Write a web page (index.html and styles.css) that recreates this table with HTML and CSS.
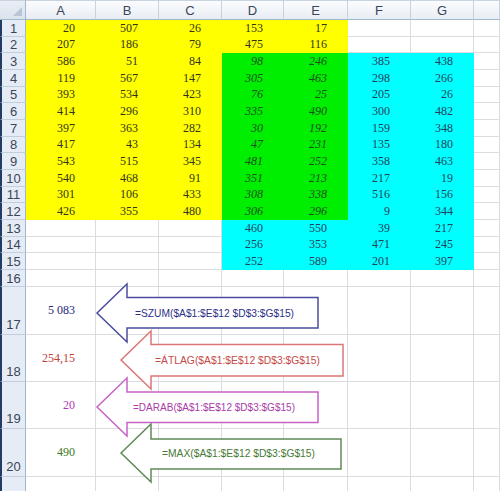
FILE: index.html
```html
<!DOCTYPE html>
<html>
<head>
<meta charset="utf-8">
<link rel="stylesheet" href="styles.css">
</head>
<body>
<div class="sheet">
  <div class="row head">
    <div class="corner"></div><div class="ch">A</div><div class="ch">B</div><div class="ch">C</div><div class="ch">D</div><div class="ch">E</div><div class="ch">F</div><div class="ch">G</div><div class="ch"></div>
  </div>
  <div class="row h17"><div class="rh">1</div><div class="c y">20</div><div class="c y">507</div><div class="c y">26</div><div class="c y">153</div><div class="c y">17</div><div class="c"></div><div class="c"></div><div class="c"></div></div>
  <div class="row h16"><div class="rh">2</div><div class="c y">207</div><div class="c y">186</div><div class="c y">79</div><div class="c y">475</div><div class="c y">116</div><div class="c"></div><div class="c"></div><div class="c"></div></div>
  <div class="row h17"><div class="rh">3</div><div class="c y">586</div><div class="c y">51</div><div class="c y">84</div><div class="c g">98</div><div class="c g">246</div><div class="c b">385</div><div class="c b">438</div><div class="c"></div></div>
  <div class="row h17"><div class="rh">4</div><div class="c y">119</div><div class="c y">567</div><div class="c y">147</div><div class="c g">305</div><div class="c g">463</div><div class="c b">298</div><div class="c b">266</div><div class="c"></div></div>
  <div class="row h16"><div class="rh">5</div><div class="c y">393</div><div class="c y">534</div><div class="c y">423</div><div class="c g">76</div><div class="c g">25</div><div class="c b">205</div><div class="c b">26</div><div class="c"></div></div>
  <div class="row h17"><div class="rh">6</div><div class="c y">414</div><div class="c y">296</div><div class="c y">310</div><div class="c g">335</div><div class="c g">490</div><div class="c b">300</div><div class="c b">482</div><div class="c"></div></div>
  <div class="row h17"><div class="rh">7</div><div class="c y">397</div><div class="c y">363</div><div class="c y">282</div><div class="c g">30</div><div class="c g">192</div><div class="c b">159</div><div class="c b">348</div><div class="c"></div></div>
  <div class="row h16"><div class="rh">8</div><div class="c y">417</div><div class="c y">43</div><div class="c y">134</div><div class="c g">47</div><div class="c g">231</div><div class="c b">135</div><div class="c b">180</div><div class="c"></div></div>
  <div class="row h17"><div class="rh">9</div><div class="c y">543</div><div class="c y">515</div><div class="c y">345</div><div class="c g">481</div><div class="c g">252</div><div class="c b">358</div><div class="c b">463</div><div class="c"></div></div>
  <div class="row h17"><div class="rh">10</div><div class="c y">540</div><div class="c y">468</div><div class="c y">91</div><div class="c g">351</div><div class="c g">213</div><div class="c b">217</div><div class="c b">19</div><div class="c"></div></div>
  <div class="row h16"><div class="rh">11</div><div class="c y">301</div><div class="c y">106</div><div class="c y">433</div><div class="c g">308</div><div class="c g">338</div><div class="c b">516</div><div class="c b">156</div><div class="c"></div></div>
  <div class="row h17"><div class="rh">12</div><div class="c y">426</div><div class="c y">355</div><div class="c y">480</div><div class="c g">306</div><div class="c g">296</div><div class="c b">9</div><div class="c b">344</div><div class="c"></div></div>
  <div class="row h17"><div class="rh">13</div><div class="c"></div><div class="c"></div><div class="c"></div><div class="c b">460</div><div class="c b">550</div><div class="c b">39</div><div class="c b">217</div><div class="c"></div></div>
  <div class="row h16"><div class="rh">14</div><div class="c"></div><div class="c"></div><div class="c"></div><div class="c b">256</div><div class="c b">353</div><div class="c b">471</div><div class="c b">245</div><div class="c"></div></div>
  <div class="row h17"><div class="rh">15</div><div class="c"></div><div class="c"></div><div class="c"></div><div class="c b">252</div><div class="c b">589</div><div class="c b">201</div><div class="c b">397</div><div class="c"></div></div>
  <div class="row h17"><div class="rh">16</div><div class="c"></div><div class="c"></div><div class="c"></div><div class="c"></div><div class="c"></div><div class="c"></div><div class="c"></div><div class="c"></div></div>
  <div class="row h48"><div class="rh tall">17</div><div class="c v-blue">5 083</div><div class="c"></div><div class="c"></div><div class="c"></div><div class="c"></div><div class="c"></div><div class="c"></div><div class="c"></div></div>
  <div class="row h47"><div class="rh tall">18</div><div class="c v-red">254,15</div><div class="c"></div><div class="c"></div><div class="c"></div><div class="c"></div><div class="c"></div><div class="c"></div><div class="c"></div></div>
  <div class="row h47"><div class="rh tall">19</div><div class="c v-mag">20</div><div class="c"></div><div class="c"></div><div class="c"></div><div class="c"></div><div class="c"></div><div class="c"></div><div class="c"></div></div>
  <div class="row h48"><div class="rh tall">20</div><div class="c v-green">490</div><div class="c"></div><div class="c"></div><div class="c"></div><div class="c"></div><div class="c"></div><div class="c"></div><div class="c"></div></div>
  <div class="row h20"><div class="rh"></div><div class="c"></div><div class="c"></div><div class="c"></div><div class="c"></div><div class="c"></div><div class="c"></div><div class="c"></div><div class="c"></div></div>

  <svg class="overlay" width="500" height="491" viewBox="0 0 500 491">
    <path class="ar ar-blue" d="M97,313 L127,284 L127,297.5 L318,297.5 L318,328 L127,328 L127,342 Z"/>
    <text class="tx tx-blue" x="135" y="316.5" textLength="159" lengthAdjust="spacingAndGlyphs">=SZUM($A$1:$E$12 $D$3:$G$15)</text>
    <path class="ar ar-red" d="M121,360 L151,331 L151,344.5 L343,344.5 L343,376 L151,376 L151,389 Z"/>
    <text class="tx tx-red" x="155" y="363.5" textLength="165" lengthAdjust="spacingAndGlyphs">=ÁTLAG($A$1:$E$12 $D$3:$G$15)</text>
    <path class="ar ar-mag" d="M97,407 L127,378 L127,392 L318,392 L318,422.5 L127,422.5 L127,436 Z"/>
    <text class="tx tx-mag" x="133" y="410.5" textLength="162" lengthAdjust="spacingAndGlyphs">=DARAB($A$1:$E$12 $D$3:$G$15)</text>
    <path class="ar ar-green" d="M121,453 L151,424 L151,439 L341,439 L341,469 L151,469 L151,482 Z"/>
    <text class="tx tx-green" x="162" y="456.5" textLength="153" lengthAdjust="spacingAndGlyphs">=MAX($A$1:$E$12 $D$3:$G$15)</text>
  </svg>
</div>
</body>
</html>
```
FILE: styles.css
```css
html, body {
  margin: 0;
  padding: 0;
  background: #ffffff;
}

.sheet {
  position: relative;
  width: 500px;
  height: 491px;
  overflow: hidden;
  background: #ffffff;
}

.row {
  display: grid;
  grid-template-columns: 26px 70px 63px 63px 62px 64px 63px 63px 1fr;
}

.head { height: 20px; }
.h16 { height: 16px; }
.h17 { height: 17px; }
.h47 { height: 47px; }
.h48 { height: 48px; }
.h20 { height: 20px; }

.corner {
  position: relative;
  box-sizing: border-box;
  background: linear-gradient(#e9eef5, #dbe3ed);
  border-right: 1px solid #9eb6ce;
  border-bottom: 1px solid #9eb6ce;
  border-top: 1px solid #c9d3df;
}
.corner::after {
  content: "";
  position: absolute;
  right: 3px;
  bottom: 3px;
  width: 9px;
  height: 9px;
  background: #b7c5d6;
  clip-path: polygon(100% 0, 100% 100%, 0 100%);
}

.ch {
  box-sizing: border-box;
  background: linear-gradient(#fbfcfe, #e8edf4);
  border-right: 1px solid #c8d2de;
  border-bottom: 1px solid #9eb6ce;
  border-top: 1px solid #c9d3df;
  display: flex;
  align-items: center;
  justify-content: center;
  font-family: "Liberation Sans", Arial, sans-serif;
  font-size: 13px;
  color: #3a4658;
}

.rh {
  box-sizing: border-box;
  background: #e6ecf5;
  border-left: 2px solid #223c63;
  border-right: 1px solid #9eb6ce;
  border-bottom: 1px solid #c3cedc;
  display: flex;
  align-items: center;
  justify-content: center;
  font-family: "Liberation Sans", Arial, sans-serif;
  font-size: 13px;
  color: #3a4658;
}
.rh.tall {
  align-items: flex-end;
  padding-bottom: 2px;
}

.c {
  box-sizing: border-box;
  border-right: 1px solid #dadcdf;
  border-bottom: 1px solid #dadcdf;
  display: flex;
  align-items: center;
  justify-content: flex-end;
  padding-right: 20px;
  font-family: "Liberation Serif", "Times New Roman", serif;
  font-size: 12px;
  color: #2e2e2e;
  white-space: nowrap;
}

.y {
  background: #ffff00;
  border-color: #ffff00;
  color: #34341c;
}
.g {
  background: #00ee00;
  border-color: #00ee00;
  color: #1c4f1c;
  font-style: italic;
}
.b {
  background: #00ffff;
  border-color: #00ffff;
  color: #23425c;
}

.v-blue { color: #25287a; }
.v-red { color: #c0413c; }
.v-mag { color: #b632b6; }
.v-green { color: #3e7a22; }

.overlay {
  position: absolute;
  left: 0;
  top: 0;
}

.ar {
  fill: #ffffff;
  stroke-width: 1.5;
  stroke-linejoin: miter;
}
.ar-blue { stroke: #4b4c9e; }
.ar-red { stroke: #dc7674; }
.ar-mag { stroke: #c763c7; }
.ar-green { stroke: #5f8a56; }

.tx {
  font-family: "Liberation Sans", Arial, sans-serif;
  font-size: 10.5px;
}
.tx-blue { fill: #2c2f86; }
.tx-red { fill: #c54a47; }
.tx-mag { fill: #a83ca8; }
.tx-green { fill: #467a34; }
```
